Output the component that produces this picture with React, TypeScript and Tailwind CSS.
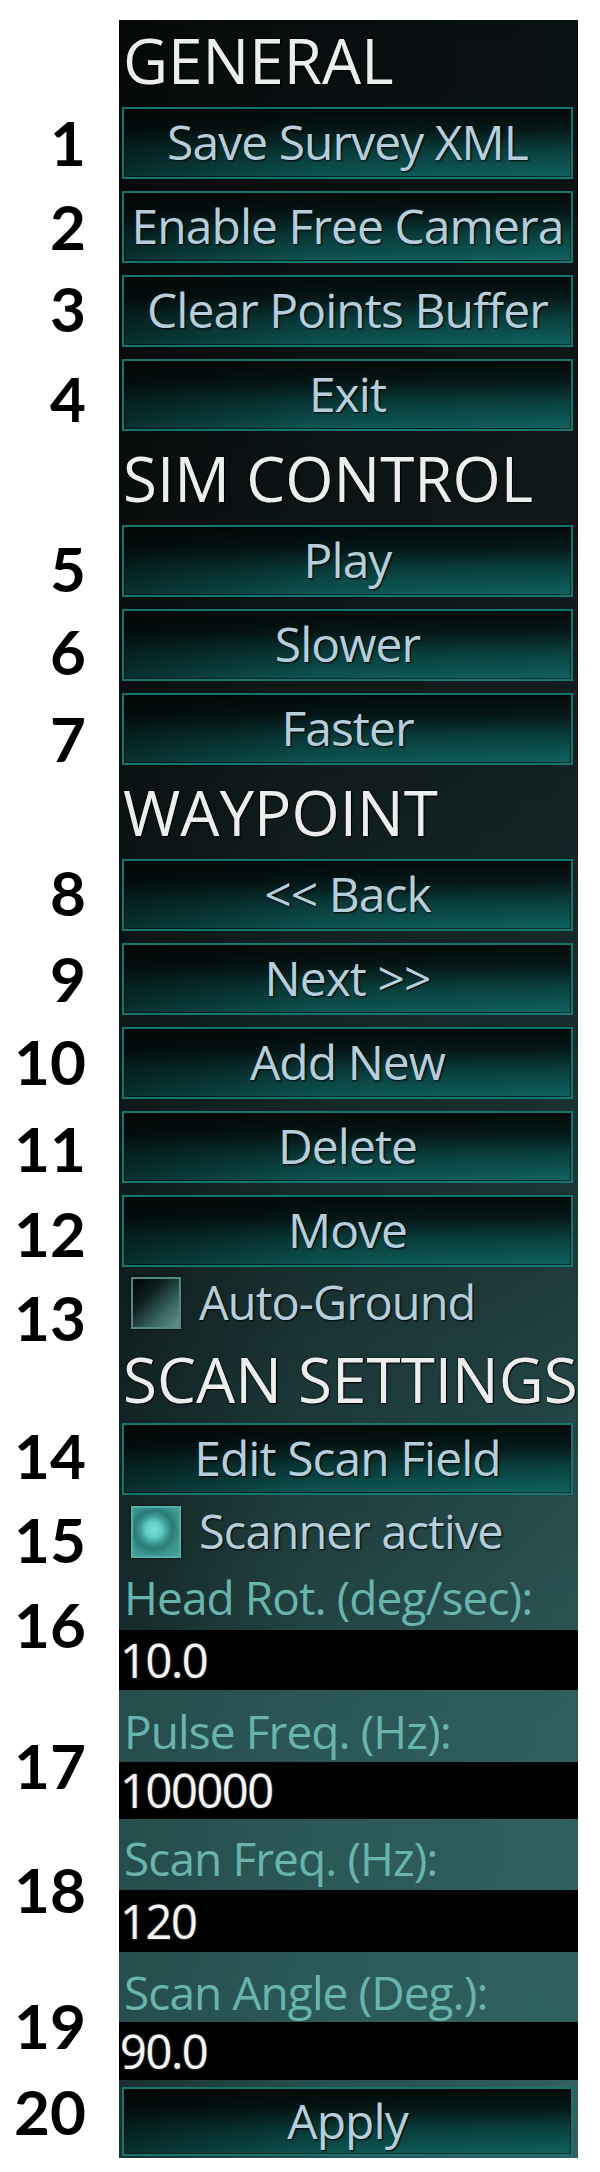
import React from "react";

const numberRows = [
  { n: "1", mt: "mt-[112px]" },
  { n: "2", mt: "mt-[24px]" },
  { n: "3", mt: "mt-[22px]" },
  { n: "4", mt: "mt-[30px]" },
  { n: "5", mt: "mt-[110px]" },
  { n: "6", mt: "mt-[23px]" },
  { n: "7", mt: "mt-[27px]" },
  { n: "8", mt: "mt-[94px]" },
  { n: "9", mt: "mt-[26px]" },
  { n: "10", mt: "mt-[23px]" },
  { n: "11", mt: "mt-[27px]" },
  { n: "12", mt: "mt-[25px]" },
  { n: "13", mt: "mt-[24px]" },
  { n: "14", mt: "mt-[78px]" },
  { n: "15", mt: "mt-[24px]" },
  { n: "16", mt: "mt-[25px]" },
  { n: "17", mt: "mt-[81px]" },
  { n: "18", mt: "mt-[64px]" },
  { n: "19", mt: "mt-[76px]" },
  { n: "20", mt: "mt-[26px]" },
];

function Header({ text, cls }: { text: string; cls: string }) {
  return (
    <div className={`${cls} pl-[4px]`}>
      <span className="whitespace-nowrap text-[62px] leading-none text-[#eceeee] [text-shadow:0_0_2px_#000,1px_1px_1px_#000]">
        {text}
      </span>
    </div>
  );
}

function Button({ text, rowCls = "h-[84px] pt-[6px]", btnCls = "h-[72px]" }: { text: string; rowCls?: string; btnCls?: string }) {
  return (
    <div className={`${rowCls} pl-[3px] pr-[5px]`}>
      <div
        className={`${btnCls} flex items-center justify-center border-2 border-[#13766f] shadow-[inset_0_0_0_1px_rgba(0,0,0,0.55)] bg-[linear-gradient(to_right,rgba(0,0,0,0.5)_0%,rgba(0,0,0,0.12)_45%,rgba(0,0,0,0)_100%),linear-gradient(to_bottom,#030a0a_0%,#051818_30%,#0a4240_62%,#0f6360_100%)]`}
      >
        <span className="whitespace-nowrap pb-[2px] text-[48px] leading-none tracking-[-0.02em] text-[#b6cedb] [text-shadow:1px_1px_2px_#000]">
          {text}
        </span>
      </div>
    </div>
  );
}

function Check({ text, checked, rowCls }: { text: string; checked?: boolean; rowCls: string }) {
  return (
    <div className={`${rowCls} flex items-center pl-[12px]`}>
      {checked ? (
        <div className="h-[52px] w-[50px] shrink-0 border-2 border-[#4fb0a8] bg-[radial-gradient(circle_at_45%_45%,#74e0d6_0%,#62cdc4_22%,#3d9a93_38%,#2c7b76_52%,#3a968f_72%,#45a69f_100%)] shadow-[0_0_3px_rgba(0,0,0,0.8)]" />
      ) : (
        <div className="h-[52px] w-[50px] shrink-0 border-2 border-[#4f8984] bg-[linear-gradient(135deg,#010404_0%,#0e2020_35%,#3a6664_70%,#64928f_100%)] shadow-[0_0_3px_rgba(0,0,0,0.8)]" />
      )}
      <span className="ml-[18px] whitespace-nowrap text-[47px] leading-none tracking-[-0.02em] text-[#b6cedb] [text-shadow:1px_1px_2px_#000]">
        {text}
      </span>
    </div>
  );
}

function Label({ text, cls }: { text: string; cls: string }) {
  return (
    <div className={`${cls} pl-[5px]`}>
      <span className="whitespace-nowrap text-[46px] leading-none tracking-[-0.02em] text-[#69b4ac]">{text}</span>
    </div>
  );
}

function Input({ value, cls }: { value: string; cls: string }) {
  return (
    <div className={`${cls} flex items-center bg-black pl-[1px]`}>
      <span className="whitespace-nowrap text-[47px] leading-none tracking-[-0.03em] text-[#f4f4f4] [text-shadow:0_0_2px_#777]">
        {value}
      </span>
    </div>
  );
}

export default function App() {
  return (
    <div className="flex h-[2172px] w-[600px] bg-white font-['Open_Sans','Noto_Sans',sans-serif]">
      <div className="flex w-[119px] shrink-0 flex-col items-end pr-[33px]">
        {numberRows.map((r) => (
          <div key={r.n} className={`${r.mt} flex h-[60px] items-center`}>
            <span className="font-['Lato','Open_Sans',sans-serif] text-[62px] font-bold leading-none text-black">
              {r.n}
            </span>
          </div>
        ))}
      </div>

      <div className="mt-[20px] flex h-[2138px] w-[459px] shrink-0 flex-col bg-[linear-gradient(to_right,rgba(0,0,0,0.5)_0%,rgba(0,0,0,0.2)_40%,rgba(0,0,0,0)_100%),linear-gradient(to_bottom,#0a1112_0%,#0f191a_25%,#152527_40%,#1c3536_55%,#254a4a_68%,#2e5a59_80%,#316260_100%)]">
        <Header text="GENERAL" cls="h-[81px] pt-[9px]" />
        <Button text="Save Survey XML" />
        <Button text="Enable Free Camera" />
        <Button text="Clear Points Buffer" />
        <Button text="Exit" />

        <Header text="SIM CONTROL" cls="h-[82px] pt-[10px]" />
        <Button text="Play" />
        <Button text="Slower" />
        <Button text="Faster" />

        <Header text="WAYPOINT" cls="h-[82px] pt-[10px]" />
        <Button text="<< Back" />
        <Button text="Next >>" />
        <Button text="Add New" />
        <Button text="Delete" />
        <Button text="Move" />

        <Check text="Auto-Ground" rowCls="h-[59px]" />

        <Header text="SCAN SETTINGS" cls="h-[85px] pt-[16px]" />
        <Button text="Edit Scan Field" />

        <Check text="Scanner active" checked rowCls="h-[61px]" />

        <Label text="Head Rot. (deg/sec):" cls="h-[68px] pt-[12px]" />
        <Input value="10.0" cls="h-[60px]" />
        <Label text="Pulse Freq. (Hz):" cls="h-[72px] pt-[18px] bg-[#2f6261]/60" />
        <Input value="100000" cls="h-[57px]" />
        <Label text="Scan Freq. (Hz):" cls="h-[71px] pt-[16px] bg-[#2f6261]/60" />
        <Input value="120" cls="h-[62px]" />
        <Label text="Scan Angle (Deg.):" cls="h-[70px] pt-[17px] bg-[#2f6261]/60" />
        <Input value="90.0" cls="h-[58px]" />

        <Button text="Apply" rowCls="h-[78px] pt-[7px]" btnCls="h-[69px]" />
      </div>
    </div>
  );
}
